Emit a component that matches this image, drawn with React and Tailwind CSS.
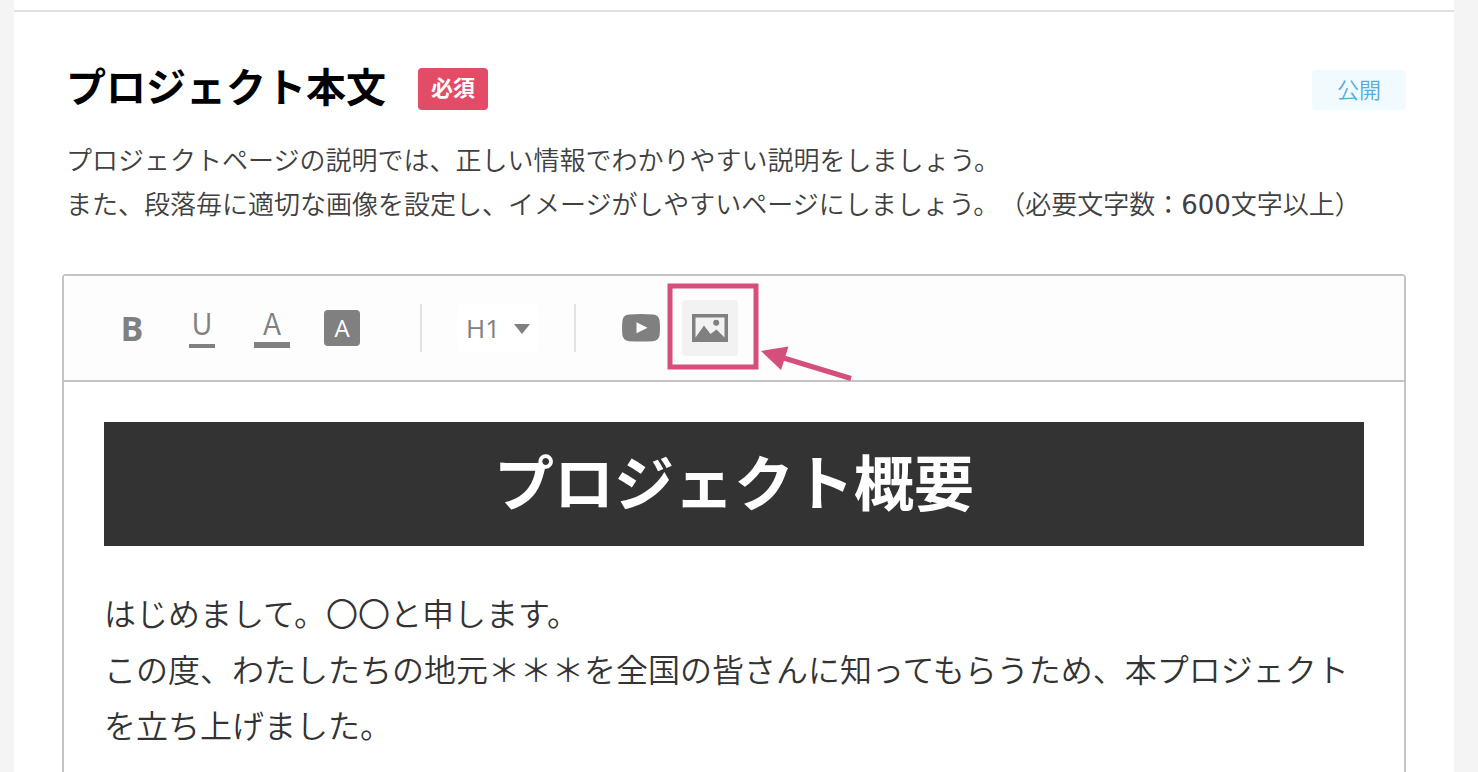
import { useState } from "react";

const ToolButton = ({ label, active = false, children }) => (
  <button
    type="button"
    aria-label={label}
    className={`flex h-14 w-14 items-center justify-center rounded text-[#808080] ${
      active ? "bg-[#f2f2f2]" : ""
    }`}
  >
    {children}
  </button>
);

const Divider = () => <div className="h-12 w-0.5 bg-[#e2e2e2]"></div>;

const YoutubeIcon = () => (
  <svg width="40" height="28" viewBox="-2 0 40 28" fill="currentColor">
    <path
      fillRule="evenodd"
      d="M7 .6Q19-.4 31 .6Q37 1 37.6 7Q38.3 14 37.6 21Q37 26.600 31 27.200Q19 28 7 27.200Q1 26.600 .4 21Q-.3 14 .4 7Q1 1 7 .6ZM14.500 8.200V19.200L25.500 13.700Z"
    />
  </svg>
);

const ImageIcon = () => (
  <svg width="36" height="28" viewBox="0 0 36 28">
    <path
      fill="currentColor"
      fillRule="evenodd"
      d="M0 0H36V28H0ZM3.500 3.500V23.500L12 11.500L18.500 20L24.500 15.500L32.500 23.500V3.500Z"
    />
    <circle cx="24.200" cy="8.800" r="3" fill="currentColor" />
  </svg>
);

const Callout = () => (
  <svg
    className="pointer-events-none absolute -left-4 -top-[18px] z-10 max-w-none"
    width="188"
    height="100"
    viewBox="0 0 188 100"
    aria-hidden="true"
  >
    <rect
      x="4"
      y="4"
      width="86"
      height="81"
      fill="none"
      stroke="#d64e7b"
      strokeWidth="5"
    />
    <path d="M95 69L122.500 64.500L115 88Z" fill="#d64e7b" />
    <path d="M116 75.500L185 96.500" stroke="#d64e7b" strokeWidth="5" />
  </svg>
);

const Toolbar = () => {
  const [level, setLevel] = useState("H1");

  return (
    <div
      role="toolbar"
      className="flex h-[106px] shrink-0 items-center border-b-2 border-[#c4c4c4] bg-[#fdfdfd] px-10 font-['Open_Sans',sans-serif]"
    >
      <div className="flex gap-3.5">
        <ToolButton label="太字">
          <span className="text-[34px] leading-8 font-bold">B</span>
        </ToolButton>
        <ToolButton label="下線">
          <span className="flex w-[26px] flex-col items-center border-b-4 border-current pb-2 font-['Noto_Sans_CJK_JP',sans-serif] text-[30px] leading-7 font-[350]">
            U
          </span>
        </ToolButton>
        <ToolButton label="文字色">
          <span className="flex w-9 flex-col items-center border-b-6 border-current pb-1.5 font-['Noto_Sans_CJK_JP',sans-serif] text-[30px] leading-7 font-[350]">
            A
          </span>
        </ToolButton>
        <ToolButton label="背景色">
          <span className="flex h-9 w-9 items-center justify-center rounded bg-[#808080] text-2xl text-white">
            A
          </span>
        </ToolButton>
      </div>

      <div className="ml-[50px] flex items-center gap-9">
        <Divider />
        <div className="relative">
          <select
            aria-label="見出し"
            value={level}
            onChange={(e) => setLevel(e.target.value)}
            className="h-12 w-20 appearance-none rounded bg-white pl-2 text-[26px] text-[#808080]"
          >
            <option>H1</option>
            <option>H2</option>
            <option>H3</option>
          </select>
          <svg
            className="pointer-events-none absolute top-5 right-2"
            width="16"
            height="10"
            viewBox="0 0 16 10"
          >
            <path d="M0 0H16L8 10Z" fill="#808080" />
          </svg>
        </div>
        <Divider />
        <div className="flex gap-3.5">
          <ToolButton label="動画">
            <YoutubeIcon />
          </ToolButton>
          <div className="relative">
            <ToolButton label="画像" active>
              <ImageIcon />
            </ToolButton>
            <Callout />
          </div>
        </div>
      </div>
    </div>
  );
};

export default function App() {
  return (
    <div className="min-h-screen bg-[#f4f4f4] pr-6 pl-3.5 font-['Noto_Sans_CJK_JP',sans-serif] [text-spacing-trim:space-all]">
      <main className="flex min-h-screen flex-col bg-white">
        <div className="h-3 shrink-0 border-b-2 border-[#e2e2e2]"></div>

        <section className="flex flex-1 flex-col px-12 pt-14">
          <div className="flex items-center pl-1">
            <h1 className="pb-2 text-[40px] leading-[34px] font-bold text-black">
              プロジェクト本文
            </h1>
            <span className="ml-8 rounded bg-[#e34c67] px-[13px] pb-1.5 text-[22px] leading-9 font-bold text-white">
              必須
            </span>
            <span className="mt-0.5 ml-auto rounded bg-[#f1fbff] px-[25px] pb-1 text-[22px] leading-9 font-[350] text-[#58acdb]">
              公開
            </span>
          </div>

          <p className="mt-[27px] pl-1 text-[26px] leading-11 font-[350] text-[#404040]">
            プロジェクトページの説明では、正しい情報でわかりやすい説明をしましょう。
            <br />
            また、段落毎に適切な画像を設定し、イメージがしやすいページにしましょう。（必要文字数：
            <span className="font-['DejaVu_Sans',sans-serif] leading-none font-normal">
              600
            </span>
            文字以上）
          </p>

          <div className="mt-[49px] flex flex-1 flex-col rounded-t border-2 border-b-0 border-[#c4c4c4]">
            <Toolbar />
            <div
              role="textbox"
              aria-label="プロジェクト本文"
              aria-multiline="true"
              tabIndex={0}
              className="flex-1 px-10 pt-10 text-[#333333]"
            >
              <h2 className="bg-[#333333] pb-2 text-center text-6xl leading-[116px] font-bold text-white">
                プロジェクト概要
              </h2>
              <p className="mt-[38px] text-[32px] leading-14 font-[350]">
                はじめまして。〇〇と申します。
                <br />
                この度、わたしたちの地元＊＊＊を全国の皆さんに知ってもらうため、本プロジェクトを立ち上げました。
              </p>
            </div>
          </div>
        </section>
      </main>
    </div>
  );
}
